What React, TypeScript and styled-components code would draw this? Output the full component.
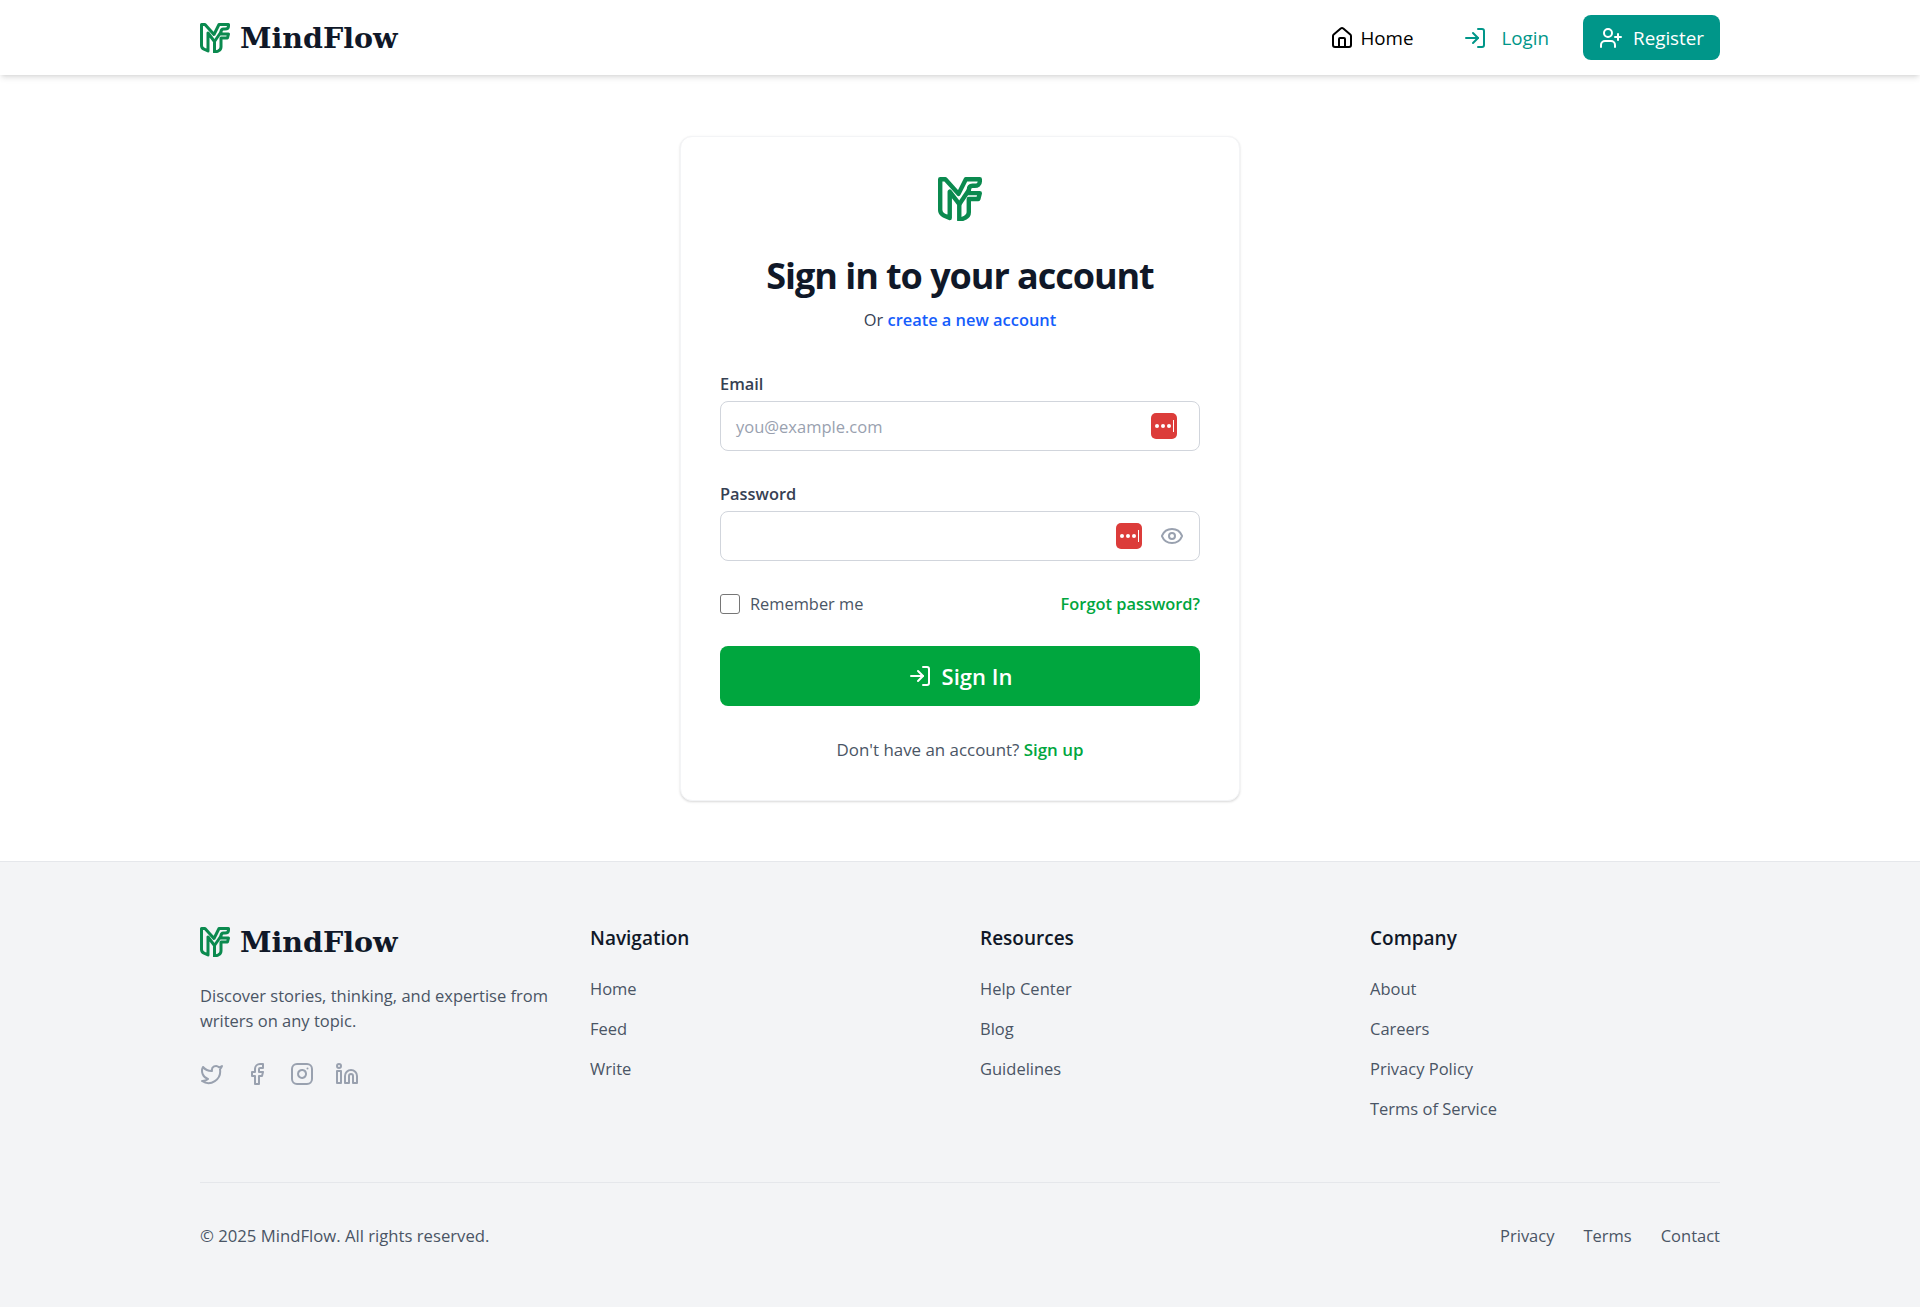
import { Eye, Facebook, House, Instagram, Linkedin, LogIn, Twitter, UserPlus } from "lucide-react";
import styled, { createGlobalStyle } from "styled-components";

const GlobalStyle = createGlobalStyle`
  * { box-sizing: border-box; }
  body {
    margin: 0;
    background: #fff;
    color: #101828;
    font-family: "Open Sans", "Noto Sans", sans-serif;
  }
`;

const Page = styled.div`
  display: flex;
  min-height: 1307px;
  flex-direction: column;
`;

const Header = styled.header`
  height: 75px;
  background: #fff;
  box-shadow: 0 4px 6px -1px rgba(0, 0, 0, 0.1), 0 2px 4px -2px rgba(0, 0, 0, 0.1);
`;

const Container = styled.div`
  width: 1520px;
  margin: 0 auto;
`;

const HeaderRow = styled(Container)`
  display: flex;
  height: 75px;
  align-items: center;
  justify-content: space-between;
`;

const Brand = styled.a`
  display: inline-flex;
  align-items: center;
  gap: 10px;
  color: #101828;
  font-family: "DejaVu Serif", serif;
  font-size: 28.5px;
  font-weight: 700;
  line-height: 36px;
  text-decoration: none;
`;

const Nav = styled.nav`
  display: flex;
  align-items: center;
  gap: 18px;
`;

const NavLink = styled.a<{ $variant: "plain" | "accent" | "solid" }>`
  display: inline-flex;
  height: 45px;
  align-items: center;
  gap: ${(p) => (p.$variant === "plain" ? 6 : p.$variant === "accent" ? 14 : 10)}px;
  padding: 0 16px;
  border-radius: 8px;
  background: ${(p) => (p.$variant === "solid" ? "#009689" : "transparent")};
  color: ${(p) => (p.$variant === "solid" ? "#fff" : p.$variant === "accent" ? "#009689" : "#000")};
  font-size: 18.8px;
  line-height: 28px;
`;

const Main = styled.main`
  display: flex;
  flex: 1;
  justify-content: center;
  padding: 61px 0 60px;
`;

const Card = styled.section`
  width: 560px;
  align-self: flex-start;
  padding: 40px 39px 38px;
  border: 1px solid #f3f4f6;
  border-radius: 12px;
  background: #fff;
  box-shadow: 0 1px 3px rgba(0, 0, 0, 0.1), 0 1px 2px rgba(0, 0, 0, 0.06);
`;

const CardHead = styled.div`
  display: flex;
  flex-direction: column;
  align-items: center;
  margin-bottom: 40px;
`;

const Title = styled.h1`
  margin: 33px 0 10px;
  color: #101828;
  font-size: 36px;
  font-weight: 700;
  letter-spacing: -1.05px;
  line-height: 44px;
`;

const Subtitle = styled.p`
  margin: 0;
  color: #364153;
  font-size: 16.4px;
  line-height: 24px;
`;

const BlueLink = styled.a`
  color: #155dfc;
  font-weight: 600;
`;

const Field = styled.div`
  margin-bottom: 31px;
`;

const Label = styled.label`
  display: block;
  margin-bottom: 5px;
  color: #364153;
  font-size: 16.4px;
  font-weight: 600;
  line-height: 24px;
`;

const InputBox = styled.div<{ $endPadding: number }>`
  display: flex;
  height: 50px;
  align-items: center;
  justify-content: flex-end;
  gap: 18px;
  padding: 0 ${(p) => p.$endPadding}px 0 15px;
  border: 1px solid #d1d5dc;
  border-radius: 8px;
`;

const Placeholder = styled.span`
  flex: 1;
  color: #99a1af;
  font-size: 16.5px;
`;

const ManagerBadge = styled.span`
  display: inline-flex;
  width: 26px;
  height: 26px;
  align-items: center;
  justify-content: center;
  gap: 2px;
  border-radius: 5px;
  background: #dc3c3a;
`;

const ManagerDot = styled.i`
  width: 4px;
  height: 4px;
  border-radius: 50%;
  background: #fff;
`;

const ManagerCaret = styled.i`
  width: 1px;
  height: 12px;
  background: #fff;
`;

const OptionsRow = styled.div`
  display: flex;
  align-items: center;
  justify-content: space-between;
  margin-bottom: 30px;
  font-size: 16.4px;
  line-height: 24px;
`;

const Remember = styled.label`
  display: inline-flex;
  align-items: center;
  gap: 10px;
  color: #4a5565;
`;

const CheckBox = styled.span`
  width: 20px;
  height: 20px;
  border: 1.5px solid #767676;
  border-radius: 3px;
`;

const GreenLink = styled.a`
  color: #00a63e;
  font-weight: 600;
`;

const SubmitButton = styled.button`
  display: flex;
  width: 100%;
  height: 60px;
  align-items: center;
  justify-content: center;
  gap: 10px;
  border: 0;
  border-radius: 8px;
  background: #00a63e;
  color: #fff;
  font: inherit;
  font-size: 22px;
  font-weight: 600;
`;

const SignupLine = styled.p`
  margin: 32px 0 0;
  color: #4a5565;
  font-size: 16.9px;
  line-height: 24px;
  text-align: center;
`;

const Footer = styled.footer`
  height: 446px;
  padding-top: 62px;
  border-top: 1px solid #e5e7eb;
  background: #f3f4f6;
`;

const FooterGrid = styled.div`
  display: grid;
  height: 259px;
  grid-template-columns: repeat(4, 350px);
  gap: 40px;
  border-bottom: 1px solid #e5e7eb;
`;

const Blurb = styled.p`
  margin: 21px 0 29px;
  color: #4a5565;
  font-size: 16.5px;
  line-height: 25px;
`;

const Socials = styled.div`
  display: flex;
  gap: 21px;
  color: #99a1af;
`;

const ColumnTitle = styled.h3`
  margin: 0 0 25px;
  color: #101828;
  font-size: 19px;
  font-weight: 600;
  line-height: 28px;
`;

const LinkList = styled.ul`
  display: flex;
  flex-direction: column;
  gap: 16px;
  margin: 0;
  padding: 0;
  list-style: none;
`;

const FooterLink = styled.li`
  color: #4a5565;
  font-size: 16.5px;
  line-height: 24px;
`;

const FooterBottom = styled.div`
  display: flex;
  align-items: center;
  justify-content: space-between;
  padding-top: 41px;
  color: #4a5565;
  font-size: 16.7px;
  line-height: 24px;
`;

const LegalLinks = styled.div`
  display: flex;
  gap: 29px;
  font-size: 16.5px;
`;

const Logo = ({ size }: { size: number }) => (
  <svg width={size} height={size} viewBox="0 0 30 30" fill="none" stroke="#0b8a4f" strokeWidth="3" strokeLinejoin="round">
    <path d="M1.500 1.500H5L14 11.500L19 1.500H28.500V3C28.500 5 27 6 25 6H23.500C22 6 21 7 21 9V11H28.500L27.500 15H21V24C21 26 20 27 18.500 27.800L14.500 29.500V18.500L8 10V28L4 26.200C2.500 25.500 1.500 24 1.500 22.500Z" />
    <path d="M14.500 18.500L21 9" />
  </svg>
);

const columns = [
  { title: "Navigation", links: ["Home", "Feed", "Write"] },
  { title: "Resources", links: ["Help Center", "Blog", "Guidelines"] },
  { title: "Company", links: ["About", "Careers", "Privacy Policy", "Terms of Service"] },
];

export default function App() {
  return (
    <Page>
      <GlobalStyle />
      <Header>
        <HeaderRow>
          <Brand>
            <Logo size={30} />
            MindFlow
          </Brand>
          <Nav>
            <NavLink $variant="plain">
              <House size={24} />
              Home
            </NavLink>
            <NavLink $variant="accent">
              <LogIn size={24} />
              Login
            </NavLink>
            <NavLink $variant="solid">
              <UserPlus size={24} />
              Register
            </NavLink>
          </Nav>
        </HeaderRow>
      </Header>
      <Main>
        <Card>
          <CardHead>
            <Logo size={44} />
            <Title>Sign in to your account</Title>
            <Subtitle>
              Or <BlueLink>create a new account</BlueLink>
            </Subtitle>
          </CardHead>
          <Field>
            <Label>Email</Label>
            <InputBox $endPadding={22}>
              <Placeholder>you@example.com</Placeholder>
              <ManagerBadge>
                <ManagerDot />
                <ManagerDot />
                <ManagerDot />
                <ManagerCaret />
              </ManagerBadge>
            </InputBox>
          </Field>
          <Field>
            <Label>Password</Label>
            <InputBox $endPadding={15}>
              <ManagerBadge>
                <ManagerDot />
                <ManagerDot />
                <ManagerDot />
                <ManagerCaret />
              </ManagerBadge>
              <Eye size={24} color="#99a1af" />
            </InputBox>
          </Field>
          <OptionsRow>
            <Remember>
              <CheckBox />
              Remember me
            </Remember>
            <GreenLink>Forgot password?</GreenLink>
          </OptionsRow>
          <SubmitButton type="button">
            <LogIn size={24} />
            Sign In
          </SubmitButton>
          <SignupLine>
            Don't have an account? <GreenLink>Sign up</GreenLink>
          </SignupLine>
        </Card>
      </Main>
      <Footer>
        <Container>
          <FooterGrid>
            <div>
              <Brand>
                <Logo size={30} />
                MindFlow
              </Brand>
              <Blurb>Discover stories, thinking, and expertise from writers on any topic.</Blurb>
              <Socials>
                <Twitter size={24} />
                <Facebook size={24} />
                <Instagram size={24} />
                <Linkedin size={24} />
              </Socials>
            </div>
            {columns.map((column) => (
              <div key={column.title}>
                <ColumnTitle>{column.title}</ColumnTitle>
                <LinkList>
                  {column.links.map((link) => (
                    <FooterLink key={link}>{link}</FooterLink>
                  ))}
                </LinkList>
              </div>
            ))}
          </FooterGrid>
          <FooterBottom>
            <span>© 2025 MindFlow. All rights reserved.</span>
            <LegalLinks>
              <span>Privacy</span>
              <span>Terms</span>
              <span>Contact</span>
            </LegalLinks>
          </FooterBottom>
        </Container>
      </Footer>
    </Page>
  );
}
